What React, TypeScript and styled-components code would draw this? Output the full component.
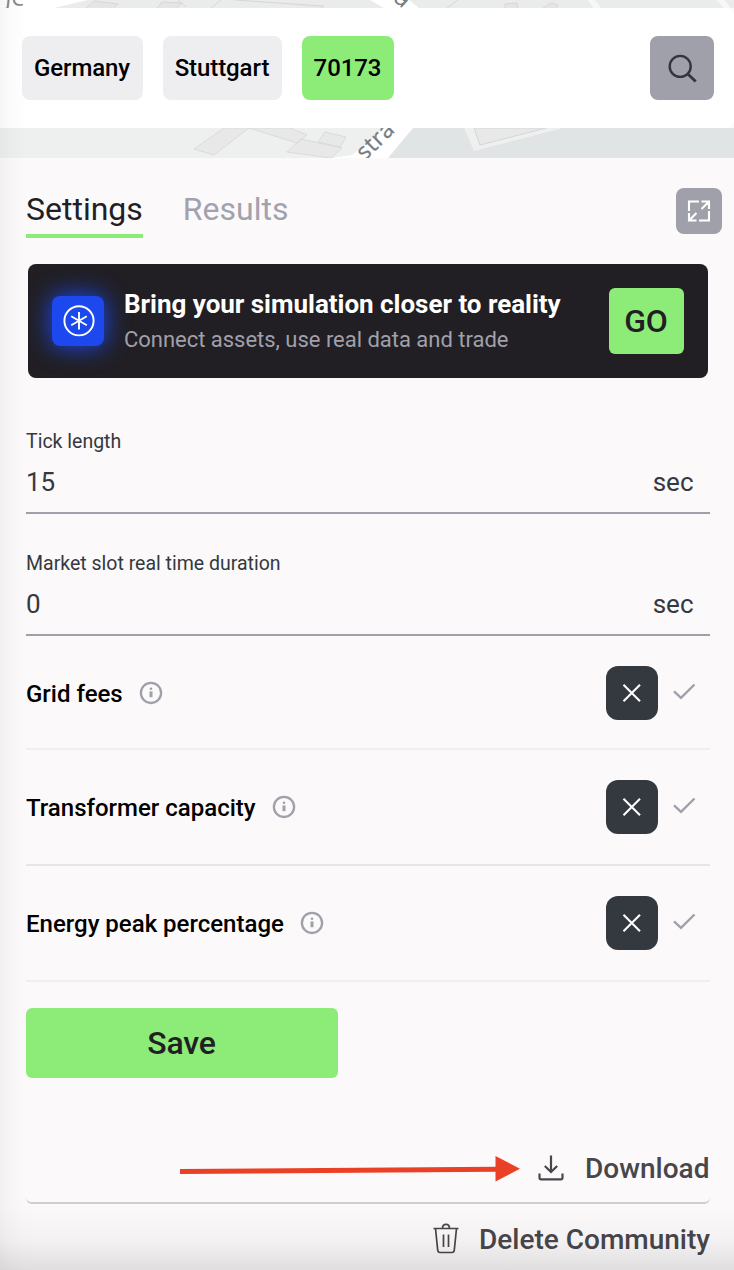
import React from "react";
import styled, { createGlobalStyle } from "styled-components";

const GlobalStyle = createGlobalStyle`
  * { box-sizing: border-box; }
  html, body { margin: 0; padding: 0; background: #fbf9fa; }
  body { font-family: Roboto, "Liberation Sans", sans-serif; overflow: hidden; }
  button { font-family: inherit; border: 0; padding: 0; margin: 0; cursor: pointer; }
  svg { display: block; flex: none; }
`;

const Page = styled.main`
  position: relative;
  width: 734px;
  height: 1270px;
  overflow: hidden;
  display: flex;
  flex-direction: column;
  background: #fbf9fa;
`;

const SideShade = styled.div`
  position: absolute;
  inset: 0 auto 0 0;
  width: 28px;
  pointer-events: none;
  background: linear-gradient(to right, rgba(0, 0, 0, 0.035), rgba(0, 0, 0, 0.012) 50%, rgba(0, 0, 0, 0));
`;

const BottomShade = styled.div`
  position: absolute;
  inset: auto 0 0 0;
  height: 66px;
  pointer-events: none;
  background: linear-gradient(to bottom, rgba(0, 0, 0, 0), rgba(0, 0, 0, 0.03) 55%, rgba(0, 0, 0, 0.11));
`;

const MapStrip = styled.svg`
  width: 734px;
`;

const SearchBar = styled.header`
  flex: none;
  display: flex;
  align-items: center;
  gap: 20px;
  height: 120px;
  padding: 0 20px 0 22px;
  background: #fff;
  border-radius: 0 8px 8px 0;
`;

const Chip = styled.button<{ $w: number; $active?: boolean }>`
  width: ${(p) => p.$w}px;
  height: 64px;
  padding-right: 1px;
  border-radius: 8px;
  background: ${(p) => (p.$active ? "#8dec78" : "#eeeef0")};
  color: #000;
  font-size: 24px;
  font-weight: 500;
  letter-spacing: -0.08px;
`;

const IconButton = styled.button<{ $size: number }>`
  display: flex;
  align-items: center;
  justify-content: center;
  width: ${(p) => p.$size}px;
  height: ${(p) => p.$size}px;
  margin-left: auto;
  border-radius: 8px;
  background: #a0a0ab;
`;

const Panel = styled.section`
  flex: none;
  display: flex;
  flex-direction: column;
  padding: 30px 24px 0 26px;
`;

const TabBar = styled.nav`
  display: flex;
  align-items: flex-start;
  gap: 40px;
  height: 76px;
  margin-right: -12px;
`;

const Tab = styled.button<{ $active?: boolean }>`
  height: 50px;
  padding-bottom: 3px;
  border-bottom: 4px solid ${(p) => (p.$active ? "#8dec78" : "transparent")};
  background: none;
  color: ${(p) => (p.$active ? "#211f23" : "#a2a2ae")};
  font-size: 32px;
  line-height: 43px;
`;

const Banner = styled.div`
  display: flex;
  align-items: center;
  height: 114px;
  margin: 0 2px;
  padding: 0 24px;
  border-radius: 8px;
  background: #211f23;
  overflow: hidden;
`;

const BannerBadge = styled.div`
  display: flex;
  align-items: center;
  justify-content: center;
  width: 52px;
  height: 50px;
  padding-left: 2px;
  border-radius: 8px;
  background: #1c48ee;
  box-shadow: 0 0 24px 1px rgba(28, 72, 238, 1);
`;

const BannerText = styled.div`
  flex: 1;
  margin-left: 20px;
  padding-top: 2px;
  white-space: nowrap;
`;

const BannerTitle = styled.div`
  color: #fff;
  font-size: 26px;
  font-weight: 700;
  line-height: 35px;
  letter-spacing: -0.02px;
`;

const BannerNote = styled.div`
  color: #a0a0ab;
  font-size: 22px;
  line-height: 35px;
  letter-spacing: -0.02px;
`;

const GoButton = styled.button`
  width: 75px;
  height: 66px;
  padding-right: 1px;
  border-radius: 6px;
  background: #8dec78;
  color: #211f23;
  font-size: 32px;
  font-weight: 500;
  letter-spacing: -0.2px;
`;

const Field = styled.label<{ $top: number }>`
  display: flex;
  flex-direction: column;
  margin-top: ${(p) => p.$top}px;
  border-bottom: 2px solid #a0a0ab;
  color: #34383f;
`;

const FieldLabel = styled.span`
  font-size: 19.5px;
  line-height: 24px;
`;

const FieldValue = styled.span`
  display: flex;
  justify-content: space-between;
  padding: 8px 16.5px 10px 0;
  font-size: 26px;
  line-height: 40px;
`;

const OptionRow = styled.div<{ $h: number; $line: string }>`
  display: flex;
  align-items: flex-start;
  height: ${(p) => p.$h}px;
  padding-top: 30px;
  border-bottom: 2px solid ${(p) => p.$line};
`;

const OptionName = styled.div`
  display: flex;
  align-items: center;
  gap: 16px;
  height: 54px;
  font-size: 24px;
  font-weight: 500;
  color: #000;
`;

const OptionText = styled.span`
  padding-top: 2px;
`;

const Toggle = styled.div`
  display: flex;
  margin-left: auto;
`;

const ToggleCell = styled.button<{ $on?: boolean }>`
  display: flex;
  align-items: center;
  justify-content: center;
  width: 52px;
  height: 54px;
  border-radius: 12px;
  background: ${(p) => (p.$on ? "#34383f" : "transparent")};
`;

const SaveButton = styled.button`
  width: 312px;
  height: 70px;
  margin-top: 26px;
  padding-right: 1px;
  border-radius: 6px;
  background: #8dec78;
  color: #211f23;
  font-size: 32px;
  font-weight: 500;
  letter-spacing: -0.2px;
`;

const DownloadCard = styled.div`
  display: flex;
  align-items: center;
  height: 71px;
  margin-top: 55px;
  border-bottom: 2px solid #cfcdd0;
  border-radius: 6px;
`;

const ActionLink = styled.button`
  display: flex;
  align-items: center;
  gap: 20.5px;
  margin-left: auto;
  background: none;
  color: #48464b;
  font-size: 28px;
  font-weight: 500;
  white-space: nowrap;
`;

const DownloadText = styled.span`
  padding: 2px 0.5px 0 0;
`;

const DeleteRow = styled.div`
  display: flex;
  align-items: center;
  height: 71px;
`;

const PointerArrow = styled.svg`
  margin: 3px 0 0 153px;
`;

const InfoIcon = () => (
  <svg width="24" height="24" viewBox="0 0 24 24" fill="none">
    <circle cx="12" cy="11.9" r="10.1" stroke="#a0a0ab" strokeWidth="2.3" />
    <rect x="10.5" y="10.4" width="3" height="5.8" fill="#a0a0ab" />
    <circle cx="12" cy="7.8" r="1.3" fill="#a0a0ab" />
  </svg>
);

const options = [
  { name: "Grid fees", h: 114, line: "#f0eef0" },
  { name: "Transformer capacity", h: 116, line: "#e7e5e8" },
  { name: "Energy peak percentage", h: 116, line: "#f0eef0" },
];

export default function App() {
  return (
    <>
      <GlobalStyle />
      <Page>
        <MapStrip width="734" height="8" viewBox="0 0 734 8">
          <rect width="734" height="8" fill="#eaebeb" />
          <path d="M0 0H88L54 8H0Z" fill="#fff" />
          <path d="M86 8L94 1L118 4L114 8M157 8L162 2L182 3L177 8M178 0L186 7M211 8L221 0M234 0L324 6L322 8M447 8L458 0M505 8V4L517 3L518 8M543 8L551 3L558 5L556 8" fill="#e5e5e5" stroke="#d6d8d8" />
          <path d="M590 -2L598 9M719 -2L728 9" stroke="#f6f7f7" strokeWidth="6" />
          <path d="M370 0H409L419 8H384Z" fill="#fff" />
          <text transform="translate(5 4) rotate(6)" fontSize="24" fill="#878787" fontFamily="Open Sans">je</text>
          <text transform="translate(385 -7) rotate(42)" fontSize="25" fill="#777b7b" fontFamily="Open Sans">ra</text>
        </MapStrip>
        <SearchBar>
          <Chip $w={121}>Germany</Chip>
          <Chip $w={119}>Stuttgart</Chip>
          <Chip $w={92} $active>70173</Chip>
          <IconButton $size={64} aria-label="Search">
            <svg width="30" height="30" viewBox="0 0 30 30" fill="none" stroke="#34343d" strokeWidth="2.4">
              <circle cx="13.2" cy="13.4" r="10.5" />
              <path d="M20.8 21L28.7 28.6" strokeWidth="2.8" />
            </svg>
          </IconButton>
        </SearchBar>
        <MapStrip width="734" height="30" viewBox="0 0 734 30">
          <rect width="734" height="30" fill="#edf0ef" />
          <path d="M412 0H734V30H388Z" fill="#e0e4e4" />
          <path d="M224 0H249L214 27L194 21ZM249 0L290 0L307 7L297 15ZM325 4L346 9L340 19L318 14ZM301 11L342 20L331 30L287 24Z" fill="#e8e8e8" stroke="#d9dbdb" />
          <path d="M385 0H413L388 30H332L352 27Z" fill="#fff" />
          <path d="M464 0L474 23L563 0Z" fill="#edf0ef" />
          <path d="M474 0L480 17L546 0Z" fill="#e8e8e8" stroke="#d4d6d6" />
          <text transform="translate(365 33) rotate(-44)" fontSize="23" letterSpacing="0.5" fill="#777b7b" stroke="#777b7b" strokeWidth="0.3" fontFamily="Open Sans">stra</text>
        </MapStrip>
        <Panel>
          <TabBar>
            <Tab $active>Settings</Tab>
            <Tab>Results</Tab>
            <IconButton $size={46} aria-label="Expand">
              <svg width="24" height="24" viewBox="0 0 24 24" fill="none" stroke="#fff" strokeWidth="2.100">
                <path d="M2 12V2.500H12M22 12V21.500H12M14.500 2.500H22V10M22 2.500L14.500 10M2 14V21.500H9.500M2 21.500L9.500 14" />
              </svg>
            </IconButton>
          </TabBar>
          <Banner>
            <BannerBadge>
              <svg width="32" height="32" viewBox="0 0 32 32" fill="none" stroke="#fff" strokeWidth="1.9">
                <circle cx="16" cy="15.8" r="14.6" />
                <path d="M16 7V24.600M8.200 11.300L23.800 20.300M8.200 20.300L23.800 11.300" />
              </svg>
            </BannerBadge>
            <BannerText>
              <BannerTitle>Bring your simulation closer to reality</BannerTitle>
              <BannerNote>Connect assets, use real data and trade</BannerNote>
            </BannerText>
            <GoButton>GO</GoButton>
          </Banner>
          <Field $top={52}>
            <FieldLabel>Tick length</FieldLabel>
            <FieldValue><span>15</span><span>sec</span></FieldValue>
          </Field>
          <Field $top={38}>
            <FieldLabel>Market slot real time duration</FieldLabel>
            <FieldValue><span>0</span><span>sec</span></FieldValue>
          </Field>
          {options.map((o) => (
            <OptionRow key={o.name} $h={o.h} $line={o.line}>
              <OptionName>
                <OptionText>{o.name}</OptionText>
                <InfoIcon />
              </OptionName>
              <Toggle>
                <ToggleCell $on aria-label="Off">
                  <svg width="20" height="20" viewBox="0 0 20 20" stroke="#fff" strokeWidth="2.1">
                    <path d="M1.500 1.800L18 18.300M18 1.800L1.500 18.300" />
                  </svg>
                </ToggleCell>
                <ToggleCell aria-label="On">
                  <svg width="24" height="20" viewBox="0 0 24 20" fill="none" stroke="#a0a0ab" strokeWidth="2.4">
                    <path d="M2 8.400L9 14.800L22.500 1.500" />
                  </svg>
                </ToggleCell>
              </Toggle>
            </OptionRow>
          ))}
          <SaveButton>Save</SaveButton>
          <DownloadCard>
            <PointerArrow width="342" height="28" viewBox="0 0 342 28">
              <path d="M1 16.6L318 14.3" stroke="#ea4025" strokeWidth="5" />
              <path d="M316.500 1V26.500L341 13.800Z" fill="#ea4025" />
            </PointerArrow>
            <ActionLink>
              <svg width="28" height="28" viewBox="0 0 28 28" fill="none" stroke="#48464b" strokeWidth="2.2">
                <path d="M14 1.500V18M7.800 12L14 18L20.200 12M2.500 19.500V24Q2.500 25.300 3.800 25.300H24.200Q25.500 25.300 25.500 24V19.500" />
              </svg>
              <DownloadText>Download</DownloadText>
            </ActionLink>
          </DownloadCard>
          <DeleteRow>
            <ActionLink>
              <svg width="26" height="34" viewBox="0 0 26 34" fill="none" stroke="#48464b" strokeWidth="1.7">
                <path d="M0.500 5.500H25.500M9.500 5.500Q9.500 1.300 13 1.300Q16.500 1.300 16.500 5.500M2.500 5.500L4.700 27Q5 29.500 7 29.500H19Q21 29.500 21.300 27L23.500 5.500M10.500 11.500V24M15.500 11.500V24" />
              </svg>
              <span>Delete Community</span>
            </ActionLink>
          </DeleteRow>
        </Panel>
        <SideShade />
        <BottomShade />
      </Page>
    </>
  );
}
